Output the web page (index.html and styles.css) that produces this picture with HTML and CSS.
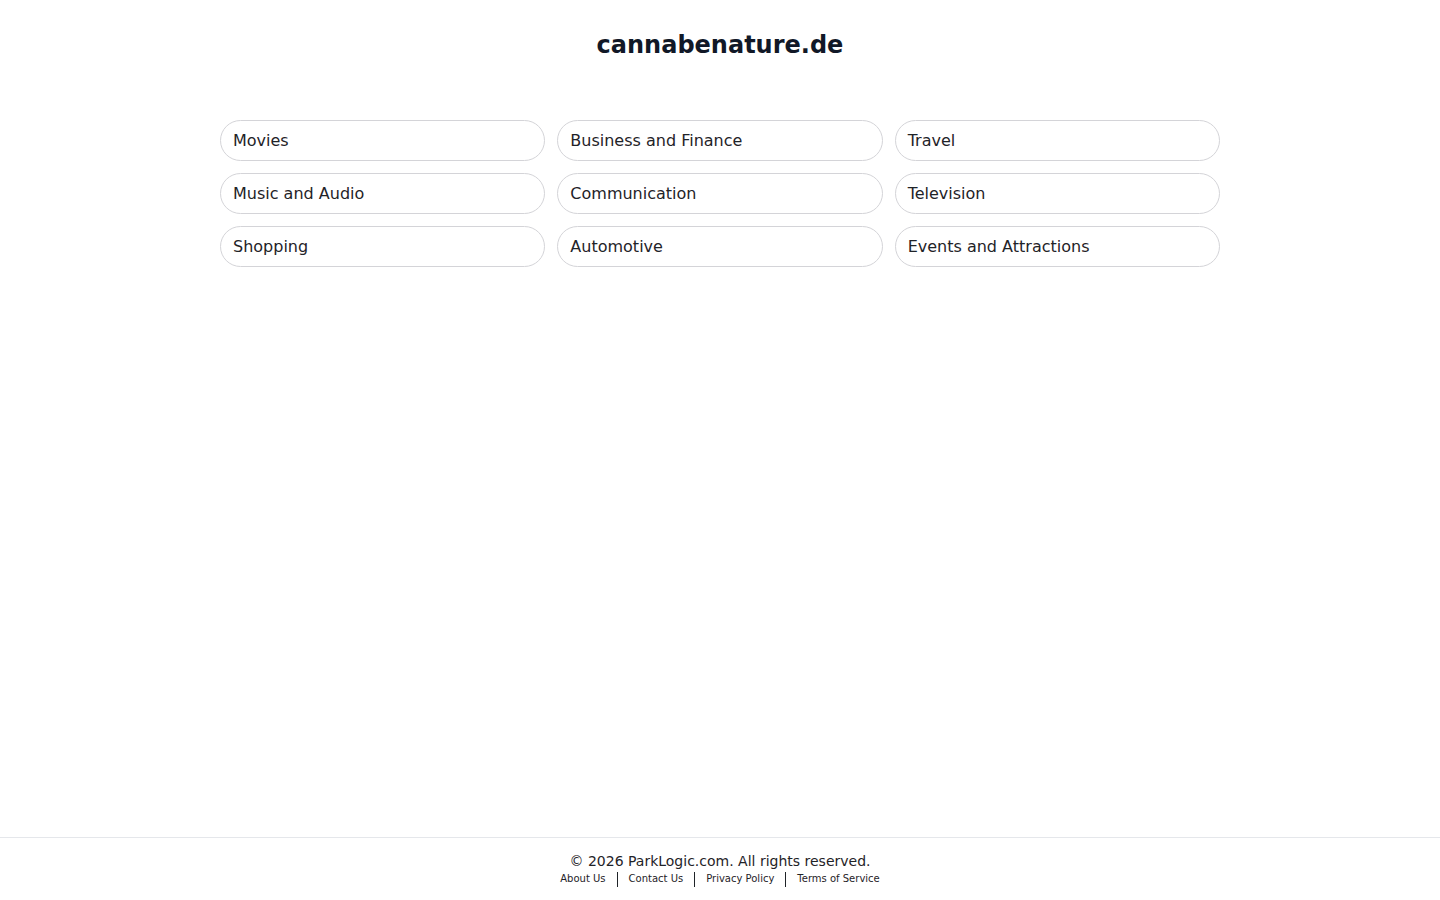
FILE: index.html
```html
<!DOCTYPE html>
<html lang="en">
<head>
<meta charset="utf-8">
<title>cannabenature.de</title>
<link rel="stylesheet" href="styles.css">
</head>
<body>
<div class="page">
  <header class="header">
    <h1 class="title">cannabenature.de</h1>
  </header>
  <main class="main">
    <div class="grid">
      <a class="item" href="#">Movies</a>
      <a class="item" href="#">Business and Finance</a>
      <a class="item" href="#">Travel</a>
      <a class="item" href="#">Music and Audio</a>
      <a class="item" href="#">Communication</a>
      <a class="item" href="#">Television</a>
      <a class="item" href="#">Shopping</a>
      <a class="item" href="#">Automotive</a>
      <a class="item" href="#">Events and Attractions</a>
    </div>
  </main>
  <footer class="footer">
    <div class="copy">© 2026 ParkLogic.com. All rights reserved.</div>
    <nav class="links">
      <a href="#">About Us</a><span class="sep"></span><a href="#">Contact Us</a><span class="sep"></span><a href="#">Privacy Policy</a><span class="sep"></span><a href="#">Terms of Service</a>
    </nav>
  </footer>
</div>
</body>
</html>
```

FILE: styles.css
```css
html, body {
  margin: 0;
  padding: 0;
  background: #ffffff;
  font-family: "DejaVu Sans", Verdana, sans-serif;
  color: #111827;
}
.page {
  min-height: 100vh;
  display: flex;
  flex-direction: column;
}
.header {
  padding-top: 29px;
  text-align: center;
}
.title {
  margin: 0;
  font-size: 24px;
  line-height: 32px;
  font-weight: bold;
  color: #111827;
}
.main {
  flex: 1;
  padding-top: 59px;
}
.grid {
  width: 1000px;
  margin: 0 auto;
  display: grid;
  grid-template-columns: repeat(3, 1fr);
  gap: 12px;
}
.item {
  display: block;
  height: 41px;
  box-sizing: border-box;
  border: 1px solid #d4d4d8;
  border-radius: 21px;
  padding: 0 12px;
  font-size: 16px;
  line-height: 39px;
  color: #1f2328;
  text-decoration: none;
}
.footer {
  border-top: 1px solid #e5e7eb;
  padding: 13px 0 13px;
  text-align: center;
}
.copy {
  font-size: 14px;
  line-height: 20px;
  color: #1f2328;
}
.links {
  display: flex;
  justify-content: center;
  align-items: center;
  height: 16px;
}
.links a {
  font-size: 10px;
  line-height: 16px;
  color: #1f2328;
  text-decoration: none;
}
.sep {
  display: inline-block;
  width: 0;
  height: 15px;
  border-left: 1px solid #1f2328;
  margin: 0 11px;
}
```
